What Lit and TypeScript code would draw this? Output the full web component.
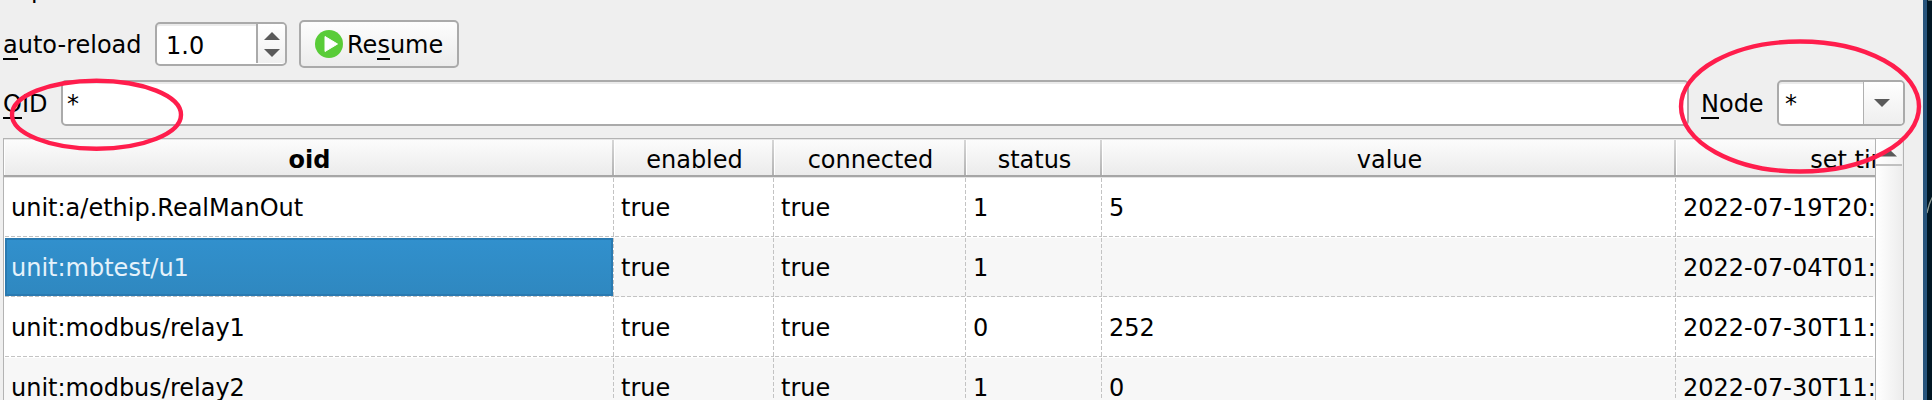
import { LitElement, html, css, svg } from "lit";
import { customElement } from "lit/decorators.js";
import { classMap } from "lit/directives/class-map.js";

const COLUMNS = ["oid", "enabled", "connected", "status", "value", "set time"];
const ROWS = [
  ["unit:a/ethip.RealManOut", "true", "true", "1", "5", "2022-07-19T20:"],
  ["unit:mbtest/u1", "true", "true", "1", "", "2022-07-04T01:"],
  ["unit:modbus/relay1", "true", "true", "0", "252", "2022-07-30T11:"],
  ["unit:modbus/relay2", "true", "true", "1", "0", "2022-07-30T11:"],
];

@customElement("oid-table")
class OidTable extends LitElement {
  static styles = css`
    :host { display: flex; border: 1px solid #b3b3b3; height: 300px; box-sizing: border-box; background: #fff; }
    .grid { flex: 1; min-width: 0; overflow: hidden; }
    .line { display: grid; grid-template-columns: 610px 160px 192px 136px 574px 370px; }
    .head { height: 39px; box-sizing: border-box; width: 2042px; overflow: hidden;
      border-top: 1px solid #e6e6e6; border-bottom: 1px solid #e4e4e4; }
    .th { height: 37px; box-sizing: border-box; line-height: 40px; text-align: center; border-bottom: 2px solid #a6a6a6;
      background: linear-gradient(#fcfcfc, #ebebeb); box-shadow: inset 1px 0 #fff; padding-left: 3px;
      display: flex; justify-content: center; }
    .th.end { padding: 0 3px 0 0; }
    .label { flex: 1; }
    .sep { width: 2px; height: 35px; background: linear-gradient(#d6d6d6, #b2b2b2); }
    .bold { font-weight: bold; }
    .row { height: 60px; }
    .td { height: 60px; box-sizing: border-box; padding-left: 7px; line-height: 60px; white-space: nowrap; overflow: hidden;
      background:
        repeating-linear-gradient(90deg, #c3c3c3 0 4px, transparent 4px 6px) 1px 58px / 100% 1px no-repeat,
        repeating-linear-gradient(#c3c3c3 0 4px, transparent 4px 6px) 100% 0 / 1px 100% no-repeat,
        linear-gradient(#fff, #fff) 0 59px / 100% 1px no-repeat; }
    .alt .td { background-color: #f7f7f7; }
    .alt .td.sel { background-color: #fff; padding-left: 1px; }
    .fill { display: block; height: 58px; box-sizing: border-box; margin-right: 1px; padding-left: 4px; line-height: 56px;
      border: 2px solid #2a7ab1; background: linear-gradient(#3190cd, #2f88c0); color: #e5f2fb; }
    .bar { width: 27px; border-left: 1px solid #b3b3b3; background: linear-gradient(90deg, #fff, #ececec); }
    .up { height: 27px; border-bottom: 2px solid #c0c0c0; margin-right: 1px; box-sizing: border-box; display: flex; justify-content: center;
      padding-top: 10px; background: linear-gradient(90deg, #fff, #f3f3f3); }
    .up svg { width: 16px; height: 8px; }
  `;
  render() {
    const last = COLUMNS.length - 1;
    return html`
      <div class="grid">
        <div class="line head">
          ${COLUMNS.map((c, i) => html`<div class=${classMap({ th: true, end: i === last })}>
            <span class=${classMap({ label: true, bold: i === 0 })}>${c}</span>${i < last ? html`<i class="sep"></i>` : ""}
          </div>`)}
        </div>
        ${ROWS.map((r, n) => html`<div class=${classMap({ line: true, row: true, alt: n % 2 === 1 })}>
          ${r.map((v, i) => n === 1 && i === 0
            ? html`<div class="td sel"><span class="fill">${v}</span></div>`
            : html`<div class="td">${v}</div>`)}
        </div>`)}
      </div>
      <div class="bar"><div class="up"><svg viewBox="0 0 16 8"><path d="M0 7.5L8 0l8 7.5z" fill="#5a5a5a" /></svg></div></div>
    `;
  }
}

@customElement("app-root")
class AppRoot extends LitElement {
  static styles = css`
    :host { display: flex; position: relative; width: 1932px; height: 400px; overflow: hidden;
      font: 24px "DejaVu Sans", sans-serif; color: #000; background: #efefef; }
    .window { width: 1923px; height: 400px; overflow: hidden; }
    .edge { width: 4px; background: #27547c; }
    .desk { width: 5px; background: #011724; }
    .desk svg { display: block; width: 5px; height: 400px; }
    .above { padding-left: 31px; line-height: 28px; }
    .above span { display: block; margin-top: -24px; height: 28px; }
    .clip { height: 20px; overflow: hidden; }
    .tools { display: flex; align-items: center; height: 48px; padding-left: 3px; }
    .filters { display: flex; align-items: center; height: 46px; margin-top: 12px; padding-left: 3px; }
    .m { display: inline-block; height: 29px; line-height: 28px; border-bottom: 2px solid #000; box-sizing: border-box; }
    .text { line-height: 28px; height: 29px; white-space: nowrap; }
    .reload { width: 152px; padding-top: 2px; }
    .box { border: 2px solid #aaa; border-radius: 5px; box-sizing: border-box; background: #fff; overflow: hidden; display: flex;
      box-shadow: inset 0 2px #ebebeb; }
    .spin { width: 132px; height: 44px; }
    .num { width: 99px; padding-left: 9px; box-sizing: border-box; line-height: 45px; }
    .steps { flex: 1; border-left: 2px solid #aaa; margin-bottom: 1px; background: linear-gradient(#fff, #f0f0f0); display: flex; flex-direction: column;
      align-items: center; gap: 9px; padding-top: 8px; }
    .steps svg { width: 16px; height: 8px; flex: none; }
    .btn { margin-left: 12px; width: 160px; height: 48px; box-sizing: border-box; border: 2px solid #aaa; border-radius: 5px;
      background: linear-gradient(#fdfdfd, #ececec); display: flex; align-items: center; padding-left: 14px; }
    .btn svg { width: 28px; height: 28px; margin-right: 4px; }
    .btn .text { padding-top: 2px; }
    .oid { width: 58px; }
    .search { width: 1628px; height: 46px; padding-left: 4px; line-height: 44px; }
    .node { width: 76px; margin-left: 12px; }
    .oid, .node { padding-top: 3px; }
    .combo { width: 128px; height: 46px; }
    .val { width: 84px; padding-left: 6px; line-height: 44px; box-sizing: border-box; }
    .drop { flex: 1; border-left: 1px solid #b0b0b0; background: linear-gradient(#fff, #eee); display: flex; align-items: center; justify-content: center; padding-right: 4px; }
    .drop svg { width: 16px; height: 8px; }
    .table { margin: 12px 0 0 3px; width: 1901px; }
    .marks { position: absolute; inset: 0; width: 1932px; height: 400px; pointer-events: none; }
  `;
  render() {
    const up = svg`<path d="M0 8L8 0l8 8z" fill="#5a5a5a" />`;
    const down = svg`<path d="M0 0h16L8 8z" fill="#5a5a5a" />`;
    return html`
      <div class="window">
        <div class="clip"><div class="above"><span>p</span></div></div>
        <div class="tools">
          <div class="text reload"><span class="m">a</span>uto-reload</div>
          <div class="box spin">
            <span class="num">1.0</span>
            <div class="steps"><svg viewBox="0 0 16 8">${up}</svg><svg viewBox="0 0 16 8">${down}</svg></div>
          </div>
          <div class="btn">
            <svg viewBox="0 0 28 28"><circle cx="14" cy="14" r="14" fill="#59cc38" /><path d="M10 6.5L22.5 14 10 21.5z" fill="#fff" stroke="#fff" stroke-width="1" stroke-linejoin="round" /></svg>
            <span class="text">Re<span class="m">s</span>ume</span>
          </div>
        </div>
        <div class="filters">
          <div class="text oid"><span class="m">O</span>ID</div>
          <div class="box search">*</div>
          <div class="text node"><span class="m">N</span>ode</div>
          <div class="box combo"><span class="val">*</span><div class="drop"><svg viewBox="0 0 16 8">${down}</svg></div></div>
        </div>
        <oid-table class="table"></oid-table>
      </div>
      <div class="edge"></div>
      <div class="desk"><svg viewBox="0 0 5 400"><path d="M5.5 197Q2 203 0 213" fill="none" stroke="#8b9a94" stroke-width="1.3" /><path d="M1 0h4" stroke="#8b9a94" stroke-width="1.4" /></svg></div>
      <svg class="marks" viewBox="0 0 1932 400" fill="none" stroke="#ff1d4c" stroke-width="4.4">
        <ellipse cx="96.5" cy="114.7" rx="84.5" ry="34" />
        <ellipse cx="1800" cy="106.5" rx="119" ry="65" />
      </svg>
    `;
  }
}
